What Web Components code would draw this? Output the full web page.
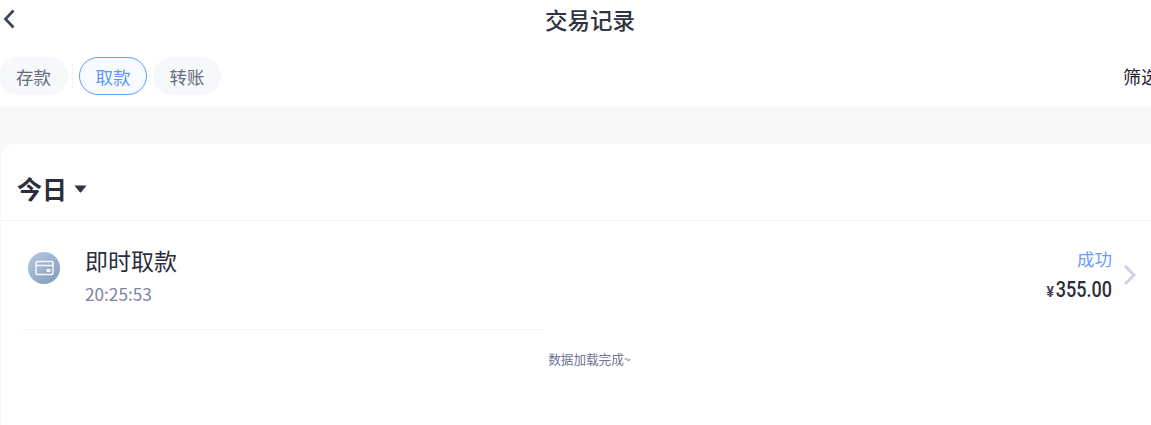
<!DOCTYPE html>
<html lang="zh">
<head>
<meta charset="utf-8">
<title>交易记录</title>
<style>
  html, body { margin: 0; height: 100%; overflow: hidden; background: #fff; }
  body { font-family: "Noto Sans CJK SC", "Noto Sans", sans-serif; }
</style>
</head>
<body>
<record-page>
  <nav-bar title="交易记录"></nav-bar>
  <tab-bar>
    <pill-tab>存款</pill-tab>
    <pill-tab active>取款</pill-tab>
    <pill-tab>转账</pill-tab>
  </tab-bar>
  <day-card label="今日">
    <record-row name="即时取款" time="20:25:53" status="成功" amount="355.00"></record-row>
    <load-end>数据加载完成~</load-end>
  </day-card>
</record-page>

<script>
class RecordPage extends HTMLElement {
  constructor() {
    super();
    this.root = this.attachShadow({ mode: 'open' });
    this.root.innerHTML = `
      <style>
        :host { display: flex; flex-direction: column; width: 1180px; height: 425px; background: #f8f8f8; overflow: hidden; }
      </style>
      <slot></slot>`;
  }
}

class NavBar extends HTMLElement {
  constructor() {
    super();
    this.root = this.attachShadow({ mode: 'open' });
    this.root.innerHTML = `
      <style>
        :host { display: flex; align-items: center; justify-content: center; position: relative; box-sizing: border-box; height: 43px; padding-bottom: 4px; background: #fff; }
        h1 { margin: 0; font-size: 22.500px; line-height: 37px; font-weight: 500; color: #303442; }
        svg { position: absolute; left: 3px; top: 9px; }
      </style>
      <svg width="14" height="20" viewBox="0 0 14 20" fill="none" stroke="#3e4454" stroke-width="2.700">
        <path d="M10.500 1.500 2.500 10l8 8.500"/>
      </svg>
      <h1></h1>`;
  }

  connectedCallback() {
    this.root.querySelector('h1').textContent = this.getAttribute('title');
  }
}

class TabBar extends HTMLElement {
  constructor() {
    super();
    this.root = this.attachShadow({ mode: 'open' });
    this.root.innerHTML = `
      <style>
        :host { display: flex; align-items: center; height: 63px; background: #fff; box-sizing: border-box; padding: 14px 0 11px; }
        .tabs { display: flex; align-items: center; margin-left: -1px; }
        .tabs ::slotted(pill-tab:first-child) { margin-right: 11px; }
        .tabs ::slotted(pill-tab:nth-child(2)) { margin-right: 6px; }
        .sep { position: absolute; left: 72px; top: 63px; width: 1px; height: 26px; background: #f3f4f7; }
        .filter { margin-left: auto; margin-right: 21px; font-size: 18px; line-height: 38px; color: #1f2330; }
      </style>
      <div class="tabs"><slot></slot></div>
      <span class="sep"></span>
      <span class="filter">筛选</span>`;
  }
}

class PillTab extends HTMLElement {
  constructor() {
    super();
    this.root = this.attachShadow({ mode: 'open' });
    this.root.innerHTML = `
      <style>
        :host { display: flex; align-items: center; justify-content: center; box-sizing: border-box; width: 68px; height: 38px; border-radius: 19px; background: #f6f8fb; font-size: 17.500px; color: #666c7d; }
        :host(:first-child) { width: 69px; }
        :host([active]) { border: 1px solid #5b9dfb; background: #f7fbff; color: #5c97fa; }
      </style>
      <slot></slot>`;
  }
}

class DayCard extends HTMLElement {
  constructor() {
    super();
    this.root = this.attachShadow({ mode: 'open' });
    this.root.innerHTML = `
      <style>
        :host { display: block; flex: 1; margin: 38px 0 0 1px; background: #fff; border-radius: 14px 14px 0 0; }
        header { display: flex; align-items: center; gap: 7px; height: 77px; box-sizing: border-box; padding: 11px 0 0 16px; border-bottom: 1px solid #f1f2f4; }
        h2 { margin: 0; font-size: 25px; line-height: 34px; font-weight: 700; color: #2b2e3c; }
        svg { margin-top: 3px; }
      </style>
      <header>
        <h2></h2>
        <svg width="13" height="8" viewBox="0 0 13 8"><path d="M.5.500h12L7.200 7.200a1 1 0 0 1-1.400 0z" fill="#32353f"/></svg>
      </header>
      <slot></slot>`;
  }

  connectedCallback() {
    this.root.querySelector('h2').textContent = this.getAttribute('label');
  }
}

class RecordRow extends HTMLElement {
  constructor() {
    super();
    this.root = this.attachShadow({ mode: 'open' });
    this.root.innerHTML = `
      <style>
        :host { display: block; position: relative; width: 1150px; height: 109px; box-sizing: border-box; }
        .row { display: flex; height: 109px; box-sizing: border-box; padding: 31px 14px 0 27px; }
        .badge { display: flex; align-items: center; justify-content: center; width: 32px; height: 32px; border-radius: 50%; background: linear-gradient(145deg, #b7cae4, #8199b9); }
        .main { margin-left: 25px; flex: 1; }
        .name { font-size: 23px; line-height: 30px; margin-top: -7px; color: #2b2e3c; }
        .time { font-size: 17.200px; line-height: 24px; margin-top: 7px; color: #7d83a6; }
        .side { text-align: right; }
        .status { font-size: 17.500px; line-height: 22px; margin-top: -4px; color: #6a9dfb; }
        .amount { display: flex; align-items: baseline; justify-content: flex-end; margin-top: 7px; color: #2b2e3c; font-family: Roboto, sans-serif; }
        .cur { font-size: 14px; font-weight: 700; margin-right: 3px; color: #44475a; }
        .num { font-size: 22.500px; line-height: 24px; font-weight: 500; display: inline-block; width: 55px; white-space: nowrap; direction: rtl; transform: scaleX(.8); transform-origin: right; }
        .more { margin: 11px 0 0 11px; }
        .line { position: absolute; left: 20px; bottom: 0; width: 522px; height: 1px; background: #f5f5f7; }
      </style>
      <div class="row">
        <span class="badge">
          <svg width="19" height="16" viewBox="0 0 19 16" fill="none">
            <rect x="1" y="1.500" width="17" height="13" rx="1.800" stroke="#fff" stroke-opacity=".9" stroke-width="1.500"/>
            <path d="M1 5.500h17" stroke="#fff" stroke-opacity=".9" stroke-width="1.500"/>
            <rect x="11.500" y="9" width="4" height="3" fill="#fff" fill-opacity=".9"/>
          </svg>
        </span>
        <div class="main">
          <div class="name"></div>
          <div class="time"></div>
        </div>
        <div class="side">
          <div class="status"></div>
          <div class="amount"><span class="cur">¥</span><span class="num"></span></div>
        </div>
        <svg class="more" width="14" height="24" viewBox="0 0 14 24" fill="none" stroke="#ced2e4" stroke-width="3">
          <path d="M2 3l9 9-9 9"/>
        </svg>
      </div>
      <span class="line"></span>`;
  }

  connectedCallback() {
    const set = (sel, value) => { this.root.querySelector(sel).textContent = value; };
    set('.name', this.getAttribute('name'));
    set('.time', this.getAttribute('time'));
    set('.status', this.getAttribute('status'));
    set('.num', this.getAttribute('amount'));
  }
}

class LoadEnd extends HTMLElement {
  constructor() {
    super();
    this.root = this.attachShadow({ mode: 'open' });
    this.root.innerHTML = `
      <style>
        :host { display: block; text-align: center; font-size: 12.600px; line-height: 18px; padding: 20px 2px 0 0; color: #6d7390; }
      </style>
      <slot></slot>`;
  }
}

customElements.define('record-page', RecordPage);
customElements.define('nav-bar', NavBar);
customElements.define('tab-bar', TabBar);
customElements.define('pill-tab', PillTab);
customElements.define('day-card', DayCard);
customElements.define('record-row', RecordRow);
customElements.define('load-end', LoadEnd);
</script>
</body>
</html>
